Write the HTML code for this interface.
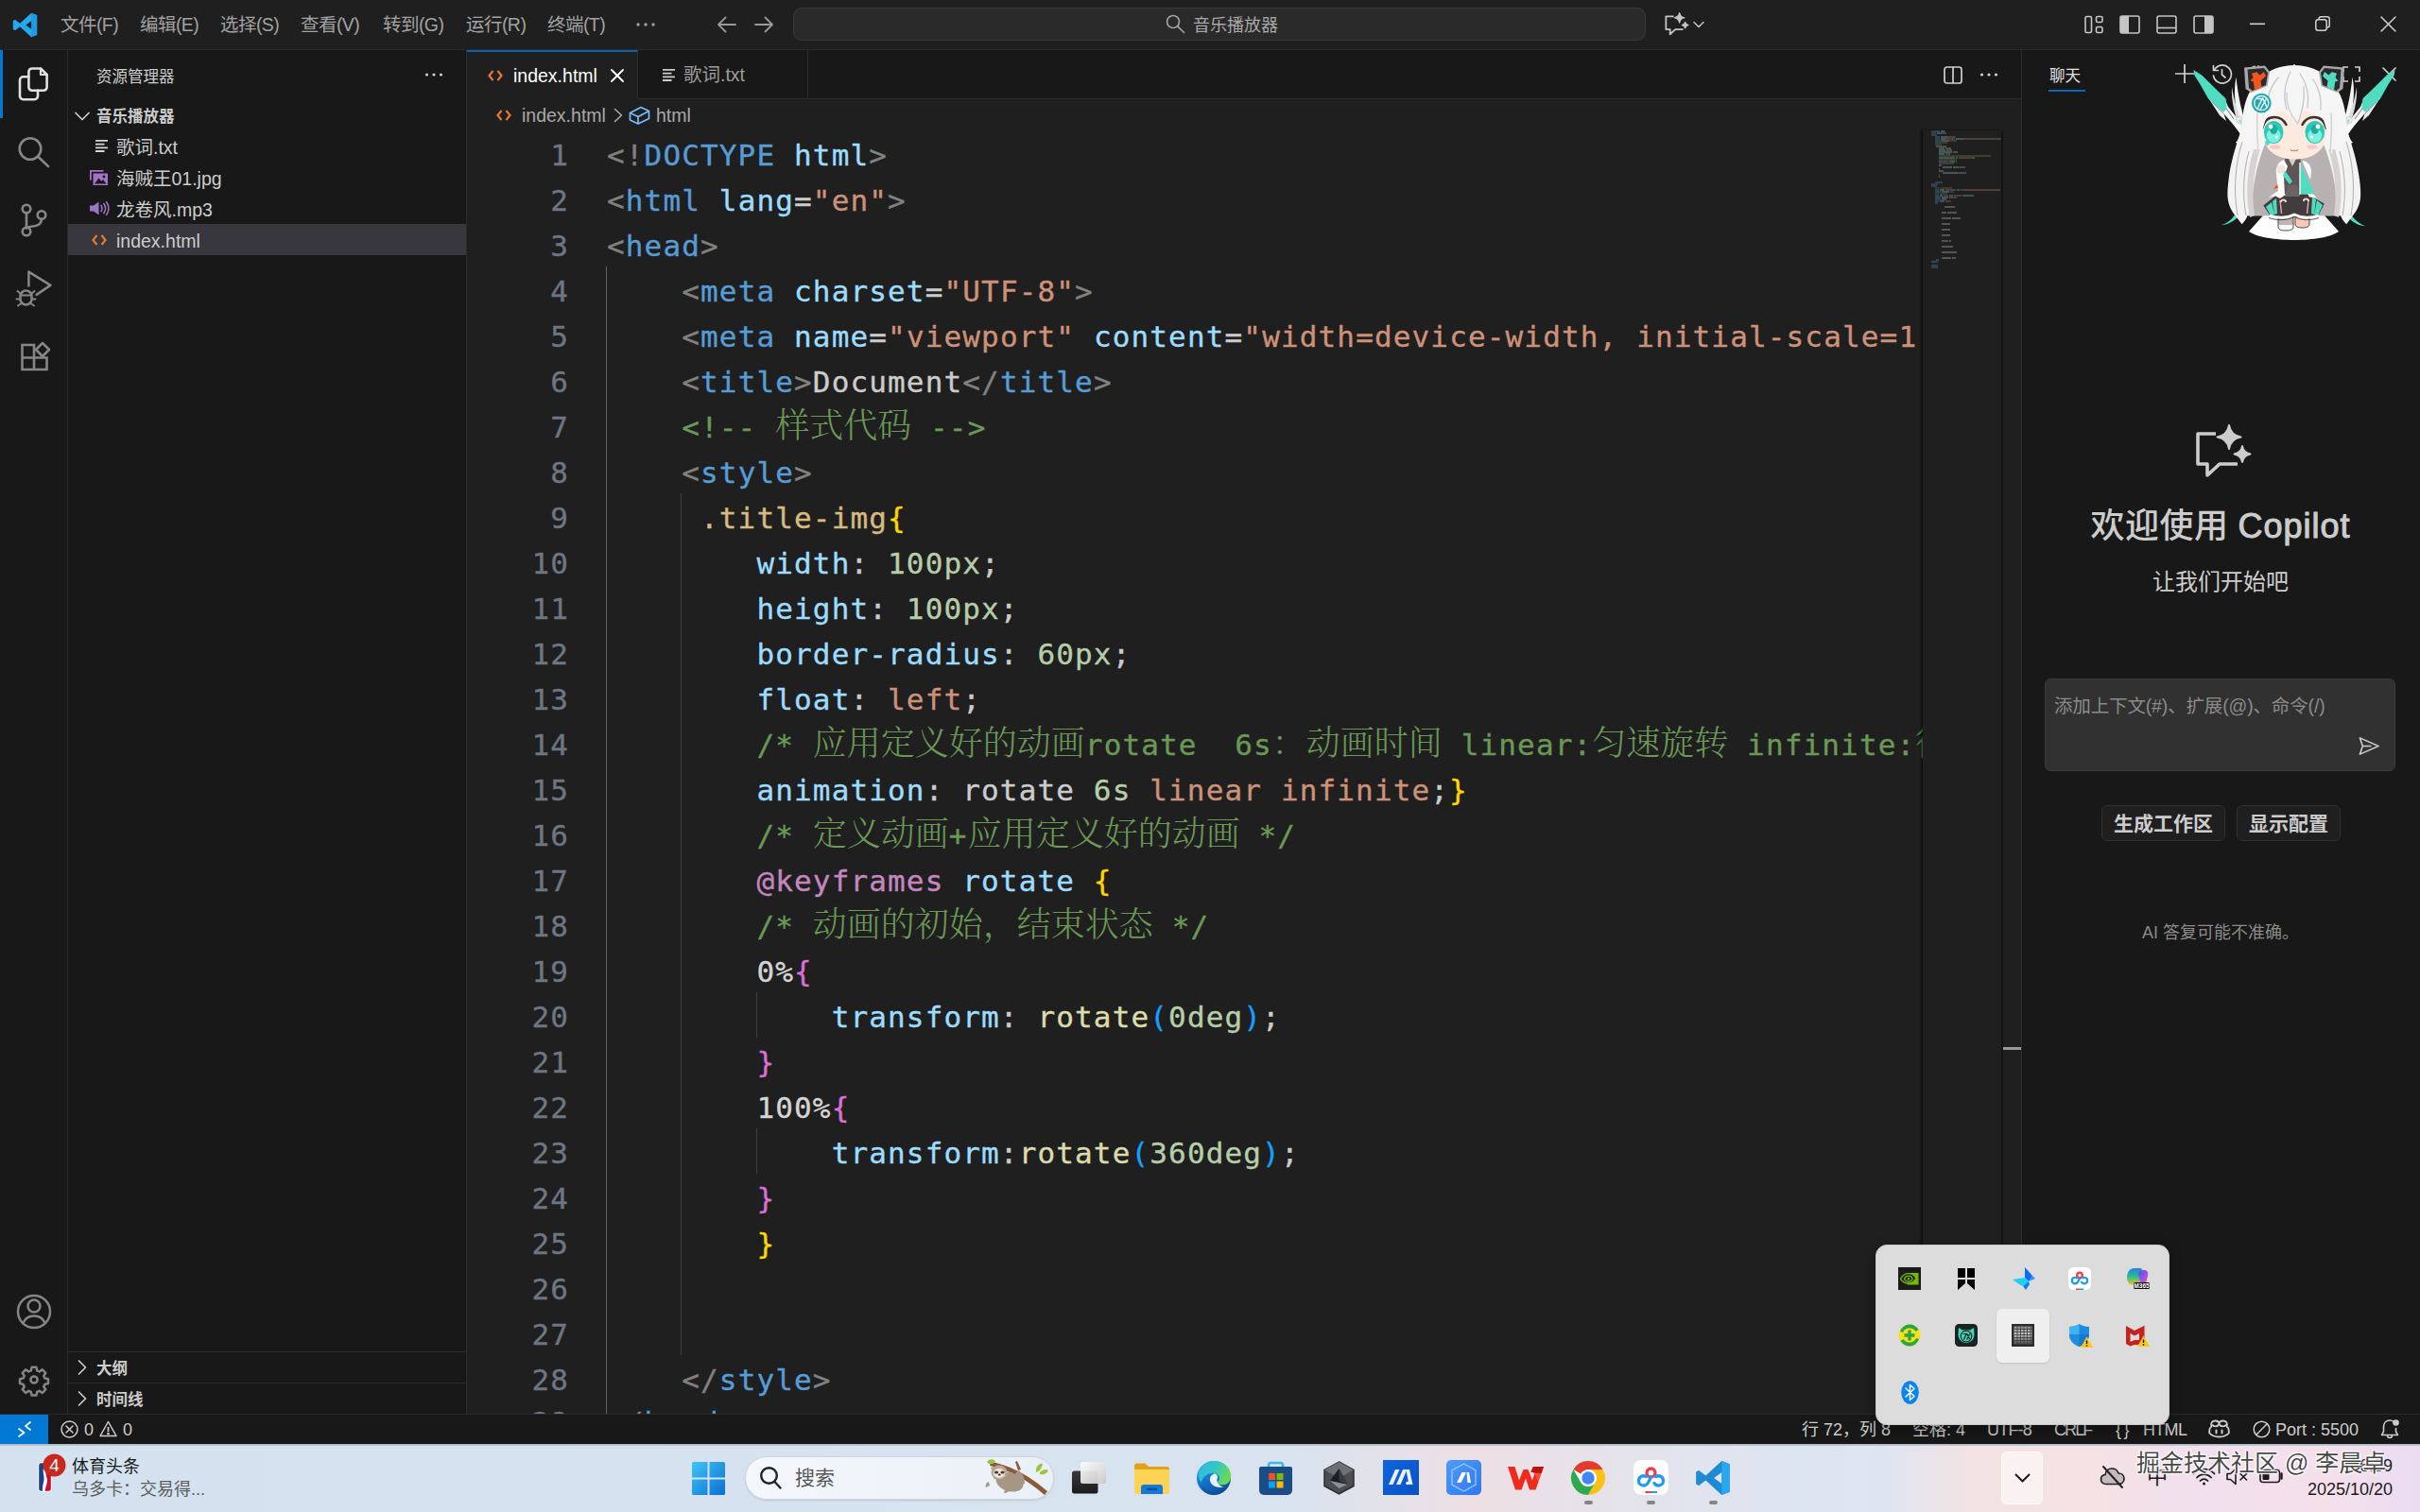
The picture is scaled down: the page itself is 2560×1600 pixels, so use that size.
<!DOCTYPE html>
<html lang="zh-CN">
<head>
<meta charset="UTF-8">
<title>音乐播放器 - Visual Studio Code</title>
<style>
*{box-sizing:border-box;margin:0;padding:0}
html,body{width:2560px;height:1600px;overflow:hidden;background:#181818}
body{font-family:"Liberation Sans","Noto Sans CJK SC",sans-serif;color:#ccc;font-size:19.5px;-webkit-font-smoothing:antialiased}
#app{position:absolute;left:0;top:0;width:2560px;height:1600px;overflow:hidden;background:#181818}
.abs{position:absolute}
svg{display:block;overflow:visible}
/* title bar */
#titlebar{position:absolute;left:0;top:0;width:2560px;height:53px;background:#1f1f1f;border-bottom:1px solid #2b2b2b}
#titlebar .menu{position:absolute;top:0;height:52px;line-height:52px;font-size:19.5px;color:#a2a2a2;white-space:nowrap;letter-spacing:-.55px}
#cmd{position:absolute;left:839px;top:8px;width:902px;height:35px;border:1px solid #3a3a3a;border-radius:9px;background:#2a2a2a}
#cmd .t{position:absolute;left:422px;top:0;line-height:36px;font-size:18px;color:#a8a8a8;white-space:nowrap}
/* activity bar */
#activity{position:absolute;left:0;top:53px;width:72px;height:1443px;background:#181818;border-right:1px solid #2b2b2b}
#activity .act{position:absolute;left:0;top:0;width:3px;height:72px;background:#0078d4}
/* sidebar */
#sidebar{position:absolute;left:72px;top:53px;width:422px;height:1443px;background:#181818;border-right:1px solid #2b2b2b}
#sidebar .title{position:absolute;left:30px;top:13px;font-size:16.5px;line-height:30px;color:#ccc;white-space:nowrap}
#sidebar .hdr{position:absolute;left:30px;font-size:16.5px;font-weight:bold;color:#ccc;line-height:37px;white-space:nowrap}
#sidebar .row{position:absolute;left:0;width:421px;height:33px;line-height:36px;font-size:19.5px;color:#ccc;white-space:nowrap}
#sidebar .row .nm{position:absolute;left:51px;top:0}
#sidebar .row.sel{background:#37373d}
#sidebar .sep{position:absolute;left:0;width:421px;height:1px;background:#2b2b2b}
/* editor */
#editor{position:absolute;left:494px;top:53px;width:1644px;height:1443px;background:#1f1f1f;overflow:hidden}
#tabs{position:absolute;left:0;top:0;width:1645px;height:52px;background:#181818;border-bottom:1px solid #2b2b2b}
#tabs .tab{position:absolute;top:0;height:52px;border-right:1px solid #2b2b2b;font-size:19.5px;line-height:53px;white-space:nowrap}
#tabs .tab.on{background:#1f1f1f;border-top:2px solid #0b62ad;color:#fff;height:53px;line-height:51px}
#bc{position:absolute;left:0;top:52px;width:1645px;height:33px;background:#1f1f1f;font-size:19.5px;color:#a9a9a9;line-height:35px;white-space:nowrap}
#code{position:absolute;left:0;top:85px;width:1540px;height:1358px;overflow:hidden;background:#1f1f1f}
#code .ln{position:relative;height:48px;line-height:48px;white-space:pre;font-family:"DejaVu Sans Mono","Liberation Mono","Noto Serif CJK SC",monospace;font-size:31px;letter-spacing:1.138px;-webkit-text-stroke:.35px}
#code .no{position:absolute;left:0;top:2px;width:108px;text-align:right;color:#6e7681}
#code .tx{position:absolute;left:148px;top:2px}
#code .zh{font-family:"Noto Serif CJK SC",serif;font-weight:300;font-size:36px;line-height:0;letter-spacing:0;-webkit-text-stroke:0}
#code .guide{position:absolute;width:1px;background:#404040}
#minimap{position:absolute;left:1540px;top:85px;width:83px;height:1357px;background:#1f1f1f;box-shadow:-2px 0 2px rgba(0,0,0,.55)}
#mmc{position:absolute;left:9px;top:0;width:74px;height:150px;overflow:hidden}
#mmc i{position:absolute;height:2px;display:block}
#mmc{opacity:.52}
#vscroll{position:absolute;left:1623px;top:85px;width:21px;height:1357px;border-left:2px solid #141414;background:#1f1f1f}
#vscroll .mark{position:absolute;left:0;top:970px;width:19px;height:3px;background:#9a9a9a}
/* chat */
#chat{position:absolute;left:2138px;top:53px;width:422px;height:1443px;background:#181818;border-left:1px solid #2b2b2b}
/* status bar */
#status{position:absolute;left:0;top:1496px;width:2560px;height:32px;background:#181818;border-top:1px solid #2b2b2b;font-size:18px;color:#ccc;white-space:nowrap}
#status .it{position:absolute;top:0;line-height:33px}
#status .remote{position:absolute;left:0;top:0;width:51px;height:32px;background:#0078d4}
/* taskbar */
#taskbar{position:absolute;left:0;top:1528px;width:2560px;height:72px;background:linear-gradient(90deg,#d4e2f0 0%,#d8e3ef 53%,#e6e1e8 58%,#eddfe4 61%,#e6e2ea 66%,#dde5f1 74%,#dfe5f0 78%,#f3e3e3 81.500%,#f6e2e4 86%,#f1e0ee 91%,#f5e0ea 96%,#eadcf2 100%)}

</style>
</head>
<body>
<div id="app">
<div id="titlebar">
<svg class="abs" style="left:13px;top:13px" width="27" height="27" viewBox="0 0 100 100"><path d="M74.5 2.5 30 43.5 11 29 3 33v34l8 4 19-14.5 44.500 41L97 88.500v-77zM74.500 66 53 50l21.500-16z" fill="#23a9f2"/><path d="M74.500 2.500 97 11.500v77l-22.500 9z" fill="#1e8fd8" opacity=".55"/></svg>
<div class="menu" style="left:64px">文件(F)</div>
<div class="menu" style="left:148px">编辑(E)</div>
<div class="menu" style="left:233px">选择(S)</div>
<div class="menu" style="left:318px">查看(V)</div>
<div class="menu" style="left:405px">转到(G)</div>
<div class="menu" style="left:493px">运行(R)</div>
<div class="menu" style="left:579px">终端(T)</div>
<svg class="abs" style="left:672px;top:23px" width="22" height="6" viewBox="0 0 22 6"><circle cx="3" cy="3" r="1.7" fill="#a2a2a2"/><circle cx="11" cy="3" r="1.7" fill="#a2a2a2"/><circle cx="19" cy="3" r="1.7" fill="#a2a2a2"/></svg>
<svg class="abs" style="left:758px;top:17px" width="22" height="18" viewBox="0 0 22 18" fill="none" stroke="#9a9a9a" stroke-width="1.8" stroke-linecap="round" stroke-linejoin="round"><path d="M20 9H2M9.500 1.500 2 9l7.500 7.500"/></svg>
<svg class="abs" style="left:797px;top:17px" width="22" height="18" viewBox="0 0 22 18" fill="none" stroke="#9a9a9a" stroke-width="1.800" stroke-linecap="round" stroke-linejoin="round"><path d="M2 9h18M12.500 1.500 20 9l-7.500 7.500"/></svg>
<div id="cmd">
<svg class="abs" style="left:393px;top:6px" width="21" height="21" viewBox="0 0 21 21" fill="none" stroke="#a0a0a0" stroke-width="1.700" stroke-linecap="round"><circle cx="8" cy="8" r="6.500"/><path d="M12.800 12.800 19.500 19.500"/></svg>
<div class="t">音乐播放器</div>
</div>
<!-- copilot chat icon -->
<svg class="abs" style="left:1761px;top:13px" width="26" height="25" viewBox="0 0 60 58" fill="none" stroke="#c5c5c5" stroke-width="4.200" stroke-linejoin="round"><path d="M22 10H3v32h10v12l13-12h19"/><path d="M36 1Q37.800 11.700 48.500 13.500 37.800 15.300 36 26 34.200 15.300 23.500 13.500 34.200 11.700 36 1Z" fill="#c5c5c5" stroke-width="2.500"/><path d="M50 23Q51.400 30.100 58.500 31.500 51.400 32.900 50 40 48.600 32.900 41.500 31.500 48.600 30.100 50 23Z" fill="#c5c5c5" stroke-width="2.200"/></svg>
<svg class="abs" style="left:1791px;top:22px" width="12" height="8" viewBox="0 0 12 8" fill="none" stroke="#c5c5c5" stroke-width="1.500" stroke-linecap="round" stroke-linejoin="round"><path d="M1 1.500 6 6.500l5-5"/></svg>
<!-- layout icons -->
<svg class="abs" style="left:2205px;top:16px" width="21" height="20" viewBox="0 0 21 20" fill="none" stroke="#c5c5c5" stroke-width="1.600"><rect x="1" y="1.500" width="6.500" height="17" rx="1.500"/><rect x="12.500" y="1.500" width="6.500" height="6" rx="1.500"/><rect x="12.500" y="12.500" width="6.500" height="6" rx="1.500"/></svg>
<svg class="abs" style="left:2242px;top:16px" width="22" height="20" viewBox="0 0 22 20"><rect x="1" y="1" width="20" height="18" rx="2" fill="none" stroke="#c5c5c5" stroke-width="1.600"/><path d="M1 3a2 2 0 0 1 2-2h7v18H3a2 2 0 0 1-2-2z" fill="#c5c5c5"/></svg>
<svg class="abs" style="left:2281px;top:16px" width="22" height="20" viewBox="0 0 22 20"><rect x="1" y="1" width="20" height="18" rx="2" fill="none" stroke="#c5c5c5" stroke-width="1.600"/><path d="M1 13.500h20" stroke="#c5c5c5" stroke-width="1.600"/></svg>
<svg class="abs" style="left:2320px;top:16px" width="22" height="20" viewBox="0 0 22 20"><rect x="1" y="1" width="20" height="18" rx="2" fill="none" stroke="#c5c5c5" stroke-width="1.600"/><path d="M21 3a2 2 0 0 0-2-2h-7v18h7a2 2 0 0 0 2-2z" fill="#c5c5c5"/></svg>
<!-- window controls -->
<svg class="abs" style="left:2380px;top:24px" width="16" height="3" viewBox="0 0 16 3"><rect x="0" y="0.500" width="16" height="1.600" fill="#d0d0d0"/></svg>
<svg class="abs" style="left:2449px;top:17px" width="16" height="16" viewBox="0 0 16 16" fill="none" stroke="#d0d0d0" stroke-width="1.500"><rect x="0.800" y="3.800" width="11.400" height="11.400" rx="2.500"/><path d="M4 3.500V3A2.200 2.200 0 0 1 6.200 0.800H13A2.200 2.200 0 0 1 15.200 3v6.800A2.200 2.200 0 0 1 13 12h-.500"/></svg>
<svg class="abs" style="left:2518px;top:17px" width="17" height="17" viewBox="0 0 17 17" fill="none" stroke="#d0d0d0" stroke-width="1.500" stroke-linecap="round"><path d="M1 1 16 16M16 1 1 16"/></svg>
</div>

<div id="activity">
<div class="act"></div>
<svg class="abs" style="left:0;top:-53px" width="72" height="1495" viewBox="0 0 72 1495" fill="none" stroke-linecap="round" stroke-linejoin="round">
<!-- explorer -->
<g stroke="#e0e0e0" stroke-width="2.600">
<path d="M33.900 72.500H43L49.600 79V92.300a3.500 3.500 0 0 1-3.500 3.500H33.900a3.500 3.500 0 0 1-3.500-3.500V76a3.500 3.500 0 0 1 3.500-3.500z"/>
<path d="M43 72.500V79h6.600" stroke-width="2.200"/>
<path d="M30.400 81.300H24.500a3.500 3.500 0 0 0-3.500 3.500v16.900a3.500 3.500 0 0 0 3.500 3.500h12a3.500 3.500 0 0 0 3.500-3.500V95.800"/>
</g>
<!-- search -->
<g stroke="#868686" stroke-width="2.600">
<circle cx="32" cy="157.500" r="11.300"/><path d="M40.500 166 51 176"/>
</g>
<!-- source control -->
<g stroke="#868686" stroke-width="2.600">
<circle cx="28" cy="221" r="4.300"/><circle cx="28" cy="245" r="4.300"/><circle cx="44" cy="227.500" r="4.300"/>
<path d="M28 225.500v15M44 232c0 5-4 7-9 7.500-3 .3-6 .5-7 2"/>
</g>
<!-- run and debug -->
<g stroke="#868686" stroke-width="2.500">
<path d="M30.400 302.500V287.600L53.400 301.900 38.600 311.900"/>
<path d="M21.500 313.500a6 6 0 0 1 12 0v3a6 6 0 0 1-12 0z"/>
<path d="M21.500 312.500h12" stroke-width="2"/>
<path d="M21.500 310.500 18.500 308M33.500 310.500 36.500 308M21 316.500H17.500M34 316.500h3.500M22.500 321 19 323.500M32.500 321 36 323.500" stroke-width="2"/>
</g>
<!-- extensions -->
<g stroke="#868686" stroke-width="2.600" stroke-linejoin="miter">
<path d="M23.500 365h12.500v26H23.500zM23.500 378.500H49.500v12.500H36"/>
<path d="M45 363 52 370 45 377 38 370z" stroke-linejoin="round"/>
</g>
<!-- account -->
<g stroke="#868686" stroke-width="2.500">
<circle cx="36" cy="1388" r="17"/><circle cx="36" cy="1382" r="6.500"/><path d="M24.500 1400.500c2-6 7-8 11.500-8s9.500 2 11.500 8"/>
</g>
<!-- settings gear -->
<g stroke="#868686" stroke-width="2.900" transform="translate(36 1460) scale(.86)">
<circle r="4.200"/>
<path d="M-2.800 -15.500h5.600l1 4.300 2.700 1.200 3.800-2.400 4 4-2.400 3.800 1.200 2.700 4.300 1v5.600l-4.300 1-1.200 2.700 2.400 3.800-4 4-3.800-2.400-2.700 1.200-1 4.300h-5.600l-1-4.300-2.700-1.200-3.800 2.400-4-4 2.400-3.800-1.200-2.700-4.300-1v-5.600l4.300-1 1.200-2.700-2.400-3.800 4-4 3.800 2.400 2.700-1.200z"/>
</g>
</svg>
</div>

<div id="sidebar">
<div class="title">资源管理器</div>
<svg class="abs" style="left:377px;top:23px" width="20" height="6" viewBox="0 0 20 6"><circle cx="2.500" cy="3" r="1.600" fill="#ccc"/><circle cx="10" cy="3" r="1.600" fill="#ccc"/><circle cx="17.500" cy="3" r="1.600" fill="#ccc"/></svg>
<svg class="abs" style="left:7px;top:65px" width="16" height="10" viewBox="0 0 16 10" fill="none" stroke="#ccc" stroke-width="1.700" stroke-linecap="round" stroke-linejoin="round"><path d="M1 1.500 8 8.500l7-7"/></svg>
<div class="hdr" style="top:52px">音乐播放器</div>
<div class="row" style="top:85px">
<svg class="abs" style="left:29px;top:10px" width="13" height="13" viewBox="0 0 13 13"><path d="M0 0h13v1.800H0zM0 3.700h9.500v1.800H0zM0 7.400h13v1.800H0zM0 11.100h9.500v1.800H0z" fill="#d4d7d6"/></svg>
<span class="nm">歌词.txt</span></div>
<div class="row" style="top:118px">
<svg class="abs" style="left:23px;top:9px" width="19" height="16" viewBox="0 0 19 16"><path d="M0 0h14.500v1.800H1.800V10.500H0z" fill="#a074c4"/><path d="M3.500 3.500H19V16H3.500z" fill="#a074c4"/><path d="M5 14.500 9.500 8.500l2.700 3.300 1.800-1.800 3.500 4.500z" fill="#181818"/><circle cx="15" cy="7" r="1.400" fill="#181818"/></svg>
<span class="nm">海贼王01.jpg</span></div>
<div class="row" style="top:151px">
<svg class="abs" style="left:23px;top:9px" width="20" height="15" viewBox="0 0 20 15" fill="none" stroke="#a074c4" stroke-width="1.600" stroke-linecap="round"><path d="M0 4.500h4L9.500 0.500v14L4 10.500H0z" fill="#a074c4" stroke="none"/><path d="M12 4.500c1.200 1.800 1.200 4.200 0 6M14.800 2.500c2.200 3 2.200 7 0 10M17.600 0.800c3 4 3 9.400 0 13.400"/></svg>
<span class="nm">龙卷风.mp3</span></div>
<div class="row sel" style="top:184px">
<svg class="abs" style="left:25px;top:11px" width="16" height="12" viewBox="0 0 16 12" fill="none" stroke="#e37933" stroke-width="2.200" stroke-linejoin="miter"><path d="M5.500 1 1.500 6l4 5M10.500 1l4 5-4 5"/></svg>
<span class="nm">index.html</span></div>
<div class="sep" style="top:1377px"></div>
<svg class="abs" style="left:10px;top:1386px" width="10" height="16" viewBox="0 0 10 16" fill="none" stroke="#ccc" stroke-width="1.700" stroke-linecap="round" stroke-linejoin="round"><path d="M1.500 1 8.500 8l-7 7"/></svg>
<div class="hdr" style="top:1377px">大纲</div>
<div class="sep" style="top:1410px"></div>
<svg class="abs" style="left:10px;top:1419px" width="10" height="16" viewBox="0 0 10 16" fill="none" stroke="#ccc" stroke-width="1.700" stroke-linecap="round" stroke-linejoin="round"><path d="M1.500 1 8.500 8l-7 7"/></svg>
<div class="hdr" style="top:1410px">时间线</div>
</div>

<div id="editor">
<div id="tabs">
<div class="tab on" style="left:0;width:181px">
<svg class="abs" style="left:22px;top:19px" width="16" height="12" viewBox="0 0 16 12" fill="none" stroke="#e37933" stroke-width="2.200"><path d="M5.500 1 1.500 6l4 5M10.500 1l4 5-4 5"/></svg>
<span class="abs" style="left:49px;top:0">index.html</span>
<svg class="abs" style="left:152px;top:18px" width="14" height="14" viewBox="0 0 14 14" fill="none" stroke="#fff" stroke-width="1.900" stroke-linecap="round"><path d="M1 1 13 13M13 1 1 13"/></svg>
</div>
<div class="tab" style="left:181px;width:180px;color:#9d9d9d">
<svg class="abs" style="left:26px;top:20px" width="13" height="13" viewBox="0 0 13 13"><path d="M0 0h13v1.800H0zM0 3.700h9.500v1.800H0zM0 7.400h13v1.800H0zM0 11.100h9.500v1.800H0z" fill="#c9cccb"/></svg>
<span class="abs" style="left:48px;top:0">歌词.txt</span>
</div>
<!-- split editor + more -->
<svg class="abs" style="left:1562px;top:17px" width="20" height="19" viewBox="0 0 20 19" fill="none" stroke="#d0d0d0" stroke-width="1.700"><rect x="1" y="1" width="18" height="17" rx="2.500"/><path d="M10 1v17"/></svg>
<svg class="abs" style="left:1600px;top:23px" width="20" height="6" viewBox="0 0 20 6"><circle cx="2.500" cy="3" r="1.600" fill="#d0d0d0"/><circle cx="10" cy="3" r="1.600" fill="#d0d0d0"/><circle cx="17.500" cy="3" r="1.600" fill="#d0d0d0"/></svg>
</div>
<div id="bc">
<svg class="abs" style="left:31px;top:11px" width="16" height="12" viewBox="0 0 16 12" fill="none" stroke="#e37933" stroke-width="2.200"><path d="M5.500 1 1.500 6l4 5M10.500 1l4 5-4 5"/></svg>
<span class="abs" style="left:58px;top:0">index.html</span>
<svg class="abs" style="left:155px;top:9px" width="10" height="16" viewBox="0 0 10 16" fill="none" stroke="#a9a9a9" stroke-width="1.600" stroke-linecap="round" stroke-linejoin="round"><path d="M1.500 1.500 8.500 8l-7 6.500"/></svg>
<svg class="abs" style="left:171px;top:7px" width="23" height="20" viewBox="0 0 23 20" fill="none" stroke="#75beff" stroke-width="1.700" stroke-linejoin="round"><path d="M1.500 7.500 13 1.500 21.500 5.500v8L10 19l-8.500-4z"/><path d="M1.500 7.500 10 11.500 21.500 5.500M10 11.500V19"/></svg>
<span class="abs" style="left:200px;top:0">html</span>
</div>

<div id="code">
<div class="guide" style="left:147px;top:144px;height:1220px;background:#646464"></div>
<div class="guide" style="left:226px;top:384px;height:912px"></div>
<div class="guide" style="left:306px;top:912px;height:48px"></div>
<div class="guide" style="left:306px;top:1056px;height:48px"></div>
<div class="ln"><span class="no">1</span><span class="tx"><span style="color:#808080">&lt;!</span><span style="color:#569cd6">DOCTYPE</span><span style="color:#9cdcfe"> html</span><span style="color:#808080">&gt;</span></span></div>
<div class="ln"><span class="no">2</span><span class="tx"><span style="color:#808080">&lt;</span><span style="color:#569cd6">html</span><span style="color:#9cdcfe"> lang</span><span style="color:#cccccc">=</span><span style="color:#ce9178">"en"</span><span style="color:#808080">&gt;</span></span></div>
<div class="ln"><span class="no">3</span><span class="tx"><span style="color:#808080">&lt;</span><span style="color:#569cd6">head</span><span style="color:#808080">&gt;</span></span></div>
<div class="ln"><span class="no">4</span><span class="tx"><span style="color:#cccccc">    </span><span style="color:#808080">&lt;</span><span style="color:#569cd6">meta</span><span style="color:#9cdcfe"> charset</span><span style="color:#cccccc">=</span><span style="color:#ce9178">"UTF-8"</span><span style="color:#808080">&gt;</span></span></div>
<div class="ln"><span class="no">5</span><span class="tx"><span style="color:#cccccc">    </span><span style="color:#808080">&lt;</span><span style="color:#569cd6">meta</span><span style="color:#9cdcfe"> name</span><span style="color:#cccccc">=</span><span style="color:#ce9178">"viewport"</span><span style="color:#9cdcfe"> content</span><span style="color:#cccccc">=</span><span style="color:#ce9178">"width=device-width, initial-scale=1.0"</span><span style="color:#808080">&gt;</span></span></div>
<div class="ln"><span class="no">6</span><span class="tx"><span style="color:#cccccc">    </span><span style="color:#808080">&lt;</span><span style="color:#569cd6">title</span><span style="color:#808080">&gt;</span><span style="color:#cccccc">Document</span><span style="color:#808080">&lt;/</span><span style="color:#569cd6">title</span><span style="color:#808080">&gt;</span></span></div>
<div class="ln"><span class="no">7</span><span class="tx"><span style="color:#cccccc">    </span><span style="color:#6a9955">&lt;!-- <span class="zh">样式代码</span> --&gt;</span></span></div>
<div class="ln"><span class="no">8</span><span class="tx"><span style="color:#cccccc">    </span><span style="color:#808080">&lt;</span><span style="color:#569cd6">style</span><span style="color:#808080">&gt;</span></span></div>
<div class="ln"><span class="no">9</span><span class="tx"><span style="color:#cccccc">     </span><span style="color:#d7ba7d">.title-img</span><span style="color:#ffd700">{</span></span></div>
<div class="ln"><span class="no">10</span><span class="tx"><span style="color:#cccccc">        </span><span style="color:#9cdcfe">width</span><span style="color:#cccccc">: </span><span style="color:#b5cea8">100px</span><span style="color:#cccccc">;</span></span></div>
<div class="ln"><span class="no">11</span><span class="tx"><span style="color:#cccccc">        </span><span style="color:#9cdcfe">height</span><span style="color:#cccccc">: </span><span style="color:#b5cea8">100px</span><span style="color:#cccccc">;</span></span></div>
<div class="ln"><span class="no">12</span><span class="tx"><span style="color:#cccccc">        </span><span style="color:#9cdcfe">border-radius</span><span style="color:#cccccc">: </span><span style="color:#b5cea8">60px</span><span style="color:#cccccc">;</span></span></div>
<div class="ln"><span class="no">13</span><span class="tx"><span style="color:#cccccc">        </span><span style="color:#9cdcfe">float</span><span style="color:#cccccc">: </span><span style="color:#ce9178">left</span><span style="color:#cccccc">;</span></span></div>
<div class="ln"><span class="no">14</span><span class="tx"><span style="color:#cccccc">        </span><span style="color:#6a9955">/* <span class="zh">应用定义好的动画</span>rotate  6s<span class="zh">：动画时间</span> linear:<span class="zh">匀速旋转</span> infinite:<span class="zh">循环播放</span> */</span></span></div>
<div class="ln"><span class="no">15</span><span class="tx"><span style="color:#cccccc">        </span><span style="color:#9cdcfe">animation</span><span style="color:#cccccc">: rotate </span><span style="color:#b5cea8">6s</span><span style="color:#ce9178"> linear infinite</span><span style="color:#cccccc">;</span><span style="color:#ffd700">}</span></span></div>
<div class="ln"><span class="no">16</span><span class="tx"><span style="color:#cccccc">        </span><span style="color:#6a9955">/* <span class="zh">定义动画</span>+<span class="zh">应用定义好的动画</span> */</span></span></div>
<div class="ln"><span class="no">17</span><span class="tx"><span style="color:#cccccc">        </span><span style="color:#c586c0">@keyframes</span><span style="color:#9cdcfe"> rotate </span><span style="color:#ffd700">{</span></span></div>
<div class="ln"><span class="no">18</span><span class="tx"><span style="color:#cccccc">        </span><span style="color:#6a9955">/* <span class="zh">动画的初始，结束状态</span> */</span></span></div>
<div class="ln"><span class="no">19</span><span class="tx"><span style="color:#cccccc">        </span><span style="color:#d4d4d4">0%</span><span style="color:#da70d6">{</span></span></div>
<div class="ln"><span class="no">20</span><span class="tx"><span style="color:#cccccc">            </span><span style="color:#9cdcfe">transform</span><span style="color:#cccccc">: </span><span style="color:#dcdcaa">rotate</span><span style="color:#179fff">(</span><span style="color:#b5cea8">0deg</span><span style="color:#179fff">)</span><span style="color:#cccccc">;</span></span></div>
<div class="ln"><span class="no">21</span><span class="tx"><span style="color:#cccccc">        </span><span style="color:#da70d6">}</span></span></div>
<div class="ln"><span class="no">22</span><span class="tx"><span style="color:#cccccc">        </span><span style="color:#d4d4d4">100%</span><span style="color:#da70d6">{</span></span></div>
<div class="ln"><span class="no">23</span><span class="tx"><span style="color:#cccccc">            </span><span style="color:#9cdcfe">transform</span><span style="color:#cccccc">:</span><span style="color:#dcdcaa">rotate</span><span style="color:#179fff">(</span><span style="color:#b5cea8">360deg</span><span style="color:#179fff">)</span><span style="color:#cccccc">;</span></span></div>
<div class="ln"><span class="no">24</span><span class="tx"><span style="color:#cccccc">        </span><span style="color:#da70d6">}</span></span></div>
<div class="ln"><span class="no">25</span><span class="tx"><span style="color:#cccccc">        </span><span style="color:#ffd700">}</span></span></div>
<div class="ln"><span class="no">26</span><span class="tx"></span></div>
<div class="ln"><span class="no">27</span><span class="tx"></span></div>
<div class="ln"><span class="no">28</span><span class="tx"><span style="color:#cccccc">    </span><span style="color:#808080">&lt;/</span><span style="color:#569cd6">style</span><span style="color:#808080">&gt;</span></span></div>
<div class="ln" style="margin-top:-3px"><span class="no">29</span><span class="tx"><span style="color:#808080">&lt;/</span><span style="color:#569cd6">head</span><span style="color:#808080">&gt;</span></span></div>
</div>
<div id="minimap"><div id="mmc"><i style="left:0px;top:0px;width:2px;background:#808080;opacity:0.55"></i><i style="left:2px;top:0px;width:7px;background:#569cd6;opacity:0.55"></i><i style="left:10px;top:0px;width:4px;background:#9cdcfe;opacity:0.55"></i><i style="left:14px;top:0px;width:1px;background:#808080;opacity:0.55"></i><i style="left:0px;top:2px;width:1px;background:#808080;opacity:0.55"></i><i style="left:1px;top:2px;width:4px;background:#569cd6;opacity:0.55"></i><i style="left:6px;top:2px;width:4px;background:#9cdcfe;opacity:0.55"></i><i style="left:10px;top:2px;width:1px;background:#cccccc;opacity:0.55"></i><i style="left:11px;top:2px;width:4px;background:#ce9178;opacity:0.55"></i><i style="left:15px;top:2px;width:1px;background:#808080;opacity:0.55"></i><i style="left:0px;top:4px;width:1px;background:#808080;opacity:0.55"></i><i style="left:1px;top:4px;width:4px;background:#569cd6;opacity:0.55"></i><i style="left:5px;top:4px;width:1px;background:#808080;opacity:0.55"></i><i style="left:4px;top:6px;width:1px;background:#808080;opacity:0.55"></i><i style="left:5px;top:6px;width:4px;background:#569cd6;opacity:0.55"></i><i style="left:10px;top:6px;width:7px;background:#9cdcfe;opacity:0.55"></i><i style="left:17px;top:6px;width:1px;background:#cccccc;opacity:0.55"></i><i style="left:18px;top:6px;width:7px;background:#ce9178;opacity:0.55"></i><i style="left:25px;top:6px;width:1px;background:#808080;opacity:0.55"></i><i style="left:4px;top:8px;width:1px;background:#808080;opacity:0.55"></i><i style="left:5px;top:8px;width:4px;background:#569cd6;opacity:0.55"></i><i style="left:10px;top:8px;width:4px;background:#9cdcfe;opacity:0.55"></i><i style="left:14px;top:8px;width:1px;background:#cccccc;opacity:0.55"></i><i style="left:15px;top:8px;width:10px;background:#ce9178;opacity:0.55"></i><i style="left:26px;top:8px;width:7px;background:#9cdcfe;opacity:0.55"></i><i style="left:33px;top:8px;width:1px;background:#cccccc;opacity:0.55"></i><i style="left:34px;top:8px;width:39px;background:#ce9178;opacity:0.55"></i><i style="left:73px;top:8px;width:1px;background:#808080;opacity:0.55"></i><i style="left:4px;top:10px;width:1px;background:#808080;opacity:0.55"></i><i style="left:5px;top:10px;width:5px;background:#569cd6;opacity:0.55"></i><i style="left:10px;top:10px;width:1px;background:#808080;opacity:0.55"></i><i style="left:11px;top:10px;width:8px;background:#cccccc;opacity:0.55"></i><i style="left:19px;top:10px;width:2px;background:#808080;opacity:0.55"></i><i style="left:21px;top:10px;width:5px;background:#569cd6;opacity:0.55"></i><i style="left:26px;top:10px;width:1px;background:#808080;opacity:0.55"></i><i style="left:4px;top:12px;width:13px;background:#6a9955;opacity:0.55"></i><i style="left:4px;top:14px;width:1px;background:#808080;opacity:0.55"></i><i style="left:5px;top:14px;width:5px;background:#569cd6;opacity:0.55"></i><i style="left:10px;top:14px;width:1px;background:#808080;opacity:0.55"></i><i style="left:5px;top:16px;width:10px;background:#d7ba7d;opacity:0.55"></i><i style="left:15px;top:16px;width:1px;background:#ffd700;opacity:0.55"></i><i style="left:8px;top:18px;width:5px;background:#9cdcfe;opacity:0.55"></i><i style="left:13px;top:18px;width:1px;background:#cccccc;opacity:0.55"></i><i style="left:15px;top:18px;width:5px;background:#b5cea8;opacity:0.55"></i><i style="left:20px;top:18px;width:1px;background:#cccccc;opacity:0.55"></i><i style="left:8px;top:20px;width:6px;background:#9cdcfe;opacity:0.55"></i><i style="left:14px;top:20px;width:1px;background:#cccccc;opacity:0.55"></i><i style="left:16px;top:20px;width:5px;background:#b5cea8;opacity:0.55"></i><i style="left:21px;top:20px;width:1px;background:#cccccc;opacity:0.55"></i><i style="left:8px;top:22px;width:13px;background:#9cdcfe;opacity:0.55"></i><i style="left:21px;top:22px;width:1px;background:#cccccc;opacity:0.55"></i><i style="left:23px;top:22px;width:4px;background:#b5cea8;opacity:0.55"></i><i style="left:27px;top:22px;width:1px;background:#cccccc;opacity:0.55"></i><i style="left:8px;top:24px;width:5px;background:#9cdcfe;opacity:0.55"></i><i style="left:13px;top:24px;width:1px;background:#cccccc;opacity:0.55"></i><i style="left:15px;top:24px;width:4px;background:#ce9178;opacity:0.55"></i><i style="left:19px;top:24px;width:1px;background:#cccccc;opacity:0.55"></i><i style="left:8px;top:26px;width:55px;background:#6a9955;opacity:0.55"></i><i style="left:8px;top:28px;width:9px;background:#9cdcfe;opacity:0.55"></i><i style="left:17px;top:28px;width:8px;background:#cccccc;opacity:0.55"></i><i style="left:26px;top:28px;width:2px;background:#b5cea8;opacity:0.55"></i><i style="left:29px;top:28px;width:15px;background:#ce9178;opacity:0.55"></i><i style="left:44px;top:28px;width:1px;background:#cccccc;opacity:0.55"></i><i style="left:45px;top:28px;width:1px;background:#ffd700;opacity:0.55"></i><i style="left:8px;top:30px;width:19px;background:#6a9955;opacity:0.55"></i><i style="left:8px;top:32px;width:10px;background:#c586c0;opacity:0.55"></i><i style="left:19px;top:32px;width:6px;background:#9cdcfe;opacity:0.55"></i><i style="left:26px;top:32px;width:1px;background:#ffd700;opacity:0.55"></i><i style="left:8px;top:34px;width:16px;background:#6a9955;opacity:0.55"></i><i style="left:8px;top:36px;width:2px;background:#d4d4d4;opacity:0.55"></i><i style="left:10px;top:36px;width:1px;background:#da70d6;opacity:0.55"></i><i style="left:12px;top:38px;width:9px;background:#9cdcfe;opacity:0.55"></i><i style="left:21px;top:38px;width:1px;background:#cccccc;opacity:0.55"></i><i style="left:23px;top:38px;width:6px;background:#dcdcaa;opacity:0.55"></i><i style="left:29px;top:38px;width:1px;background:#179fff;opacity:0.55"></i><i style="left:30px;top:38px;width:4px;background:#b5cea8;opacity:0.55"></i><i style="left:34px;top:38px;width:1px;background:#179fff;opacity:0.55"></i><i style="left:35px;top:38px;width:1px;background:#cccccc;opacity:0.55"></i><i style="left:8px;top:40px;width:1px;background:#da70d6;opacity:0.55"></i><i style="left:8px;top:42px;width:4px;background:#d4d4d4;opacity:0.55"></i><i style="left:12px;top:42px;width:1px;background:#da70d6;opacity:0.55"></i><i style="left:12px;top:44px;width:9px;background:#9cdcfe;opacity:0.55"></i><i style="left:21px;top:44px;width:1px;background:#cccccc;opacity:0.55"></i><i style="left:22px;top:44px;width:6px;background:#dcdcaa;opacity:0.55"></i><i style="left:28px;top:44px;width:1px;background:#179fff;opacity:0.55"></i><i style="left:29px;top:44px;width:6px;background:#b5cea8;opacity:0.55"></i><i style="left:35px;top:44px;width:1px;background:#179fff;opacity:0.55"></i><i style="left:36px;top:44px;width:1px;background:#cccccc;opacity:0.55"></i><i style="left:8px;top:46px;width:1px;background:#da70d6;opacity:0.55"></i><i style="left:8px;top:48px;width:1px;background:#ffd700;opacity:0.55"></i><i style="left:4px;top:54px;width:2px;background:#808080;opacity:0.55"></i><i style="left:6px;top:54px;width:5px;background:#569cd6;opacity:0.55"></i><i style="left:11px;top:54px;width:1px;background:#808080;opacity:0.55"></i><i style="left:0px;top:56px;width:7px;background:#569cd6;opacity:0.55"></i><i style="left:0px;top:58px;width:6px;background:#569cd6;opacity:0.55"></i><i style="left:4px;top:60px;width:5px;background:#6a9955;opacity:0.50"></i><i style="left:10px;top:60px;width:12px;background:#6a9955;opacity:0.50"></i><i style="left:4px;top:62px;width:4px;background:#569cd6;opacity:0.55"></i><i style="left:9px;top:62px;width:5px;background:#9cdcfe;opacity:0.55"></i><i style="left:15px;top:62px;width:11px;background:#ce9178;opacity:0.55"></i><i style="left:27px;top:62px;width:3px;background:#9cdcfe;opacity:0.50"></i><i style="left:31px;top:62px;width:42px;background:#ce9178;opacity:0.55"></i><i style="left:4px;top:64px;width:6px;background:#569cd6;opacity:0.55"></i><i style="left:11px;top:64px;width:8px;background:#9cdcfe;opacity:0.55"></i><i style="left:20px;top:64px;width:4px;background:#569cd6;opacity:0.50"></i><i style="left:4px;top:66px;width:4px;background:#6a9955;opacity:0.50"></i><i style="left:9px;top:66px;width:8px;background:#6a9955;opacity:0.50"></i><i style="left:4px;top:68px;width:4px;background:#569cd6;opacity:0.55"></i><i style="left:9px;top:68px;width:3px;background:#9cdcfe;opacity:0.50"></i><i style="left:13px;top:68px;width:5px;background:#ce9178;opacity:0.50"></i><i style="left:19px;top:68px;width:4px;background:#9cdcfe;opacity:0.50"></i><i style="left:24px;top:68px;width:8px;background:#ce9178;opacity:0.50"></i><i style="left:33px;top:68px;width:12px;background:#9cdcfe;opacity:0.50"></i><i style="left:4px;top:70px;width:6px;background:#569cd6;opacity:0.55"></i><i style="left:11px;top:70px;width:7px;background:#9cdcfe;opacity:0.55"></i><i style="left:19px;top:70px;width:8px;background:#ce9178;opacity:0.55"></i><i style="left:4px;top:72px;width:6px;background:#569cd6;opacity:0.55"></i><i style="left:11px;top:72px;width:5px;background:#9cdcfe;opacity:0.50"></i><i style="left:4px;top:74px;width:4px;background:#569cd6;opacity:0.55"></i><i style="left:9px;top:74px;width:5px;background:#9cdcfe;opacity:0.50"></i><i style="left:15px;top:74px;width:6px;background:#ce9178;opacity:0.50"></i><i style="left:4px;top:76px;width:3px;background:#569cd6;opacity:0.55"></i><i style="left:14px;top:80px;width:11px;background:#cccccc;opacity:0.60"></i><i style="left:11px;top:86px;width:5px;background:#cccccc;opacity:0.60"></i><i style="left:17px;top:86px;width:10px;background:#cccccc;opacity:0.60"></i><i style="left:11px;top:92px;width:10px;background:#cccccc;opacity:0.60"></i><i style="left:22px;top:92px;width:9px;background:#cccccc;opacity:0.60"></i><i style="left:11px;top:98px;width:9px;background:#cccccc;opacity:0.60"></i><i style="left:11px;top:104px;width:9px;background:#cccccc;opacity:0.60"></i><i style="left:11px;top:110px;width:9px;background:#cccccc;opacity:0.60"></i><i style="left:11px;top:116px;width:7px;background:#cccccc;opacity:0.60"></i><i style="left:19px;top:116px;width:2px;background:#cccccc;opacity:0.60"></i><i style="left:11px;top:122px;width:12px;background:#cccccc;opacity:0.60"></i><i style="left:11px;top:128px;width:16px;background:#cccccc;opacity:0.60"></i><i style="left:11px;top:134px;width:10px;background:#cccccc;opacity:0.60"></i><i style="left:22px;top:134px;width:4px;background:#cccccc;opacity:0.60"></i><i style="left:5px;top:136px;width:3px;background:#cccccc;opacity:0.40"></i><i style="left:0px;top:138px;width:6px;background:#569cd6;opacity:0.55"></i><i style="left:2px;top:138px;width:6px;background:#569cd6;opacity:0.30"></i><i style="left:0px;top:142px;width:7px;background:#569cd6;opacity:0.55"></i><i style="left:0px;top:144px;width:7px;background:#569cd6;opacity:0.50"></i></div></div>
<div id="vscroll"><div class="mark"></div></div>
</div>
<div id="chat">
<div class="abs" style="left:29px;top:12px;font-size:16.5px;line-height:30px;color:#e0e0e0;white-space:nowrap">聊天</div>
<div class="abs" style="left:28px;top:42px;width:39px;height:2px;background:linear-gradient(#0a70c8,#0a5ea8)"></div>
<!-- header actions -->
<svg class="abs" style="left:162px;top:15px" width="20" height="20" viewBox="0 0 20 20" fill="none" stroke="#d0d0d0" stroke-width="1.700"><path d="M10 0v20M0 10h20"/></svg>
<svg class="abs" style="left:200px;top:14px" width="23" height="23" viewBox="0 0 23 23" fill="none" stroke="#d0d0d0" stroke-width="1.700" stroke-linecap="round" stroke-linejoin="round"><path d="M3.500 7A9.500 9.500 0 1 1 2.500 13"/><path d="M2.500 2.500V7.500H7.500"/><path d="M11.500 6.500v5.500l3.500 3"/></svg>
<svg class="abs" style="left:238px;top:15px" width="21" height="21" viewBox="0 0 21 21" fill="none" stroke="#d0d0d0" stroke-width="1.700"><circle cx="10.500" cy="10.500" r="3.200"/><circle cx="10.500" cy="10.500" r="8.500" stroke-dasharray="4.400 2.300"/></svg>
<svg class="abs" style="left:278px;top:15px" width="20" height="20" viewBox="0 0 20 20" fill="none" stroke="#d0d0d0" stroke-width="1.700"><path d="M10 0v12M4.500 7 10 12.500 15.500 7M1 18.500h18"/></svg>
<svg class="abs" style="left:339px;top:17px" width="19" height="17" viewBox="0 0 19 17" fill="none" stroke="#d0d0d0" stroke-width="1.700"><path d="M6 1H1v5M13 1h5v5M6 16H1v-5M13 16h5v-5"/></svg>
<svg class="abs" style="left:381px;top:18px" width="15" height="15" viewBox="0 0 15 15" fill="none" stroke="#d0d0d0" stroke-width="1.700" stroke-linecap="round"><path d="M1 1 14 14M14 1 1 14"/></svg>
<!-- welcome -->
<svg class="abs" style="left:183px;top:396px" width="60" height="58" viewBox="0 0 60 58" fill="none" stroke="#ccc" stroke-width="3.600" stroke-linejoin="round"><path d="M22 10H3v32h10v12l13-12h19"/><path d="M36 1Q37.800 11.700 48.500 13.500 37.800 15.300 36 26 34.200 15.300 23.500 13.500 34.200 11.700 36 1Z" fill="#ccc" stroke="#ccc" stroke-width="2"/><path d="M50 23Q51.400 30.100 58.500 31.500 51.400 32.900 50 40 48.600 32.900 41.500 31.500 48.600 30.100 50 23Z" fill="#ccc" stroke="#ccc" stroke-width="1.800"/></svg>
<div class="abs" style="left:0;top:472px;width:420px;text-align:center;font-size:36px;line-height:56px;color:#ccc;white-space:nowrap;font-weight:500"><span style="font-family:'Noto Sans CJK SC',sans-serif;font-weight:500;letter-spacing:.5px">欢迎使用</span> <span style="font-weight:400;-webkit-text-stroke:1px #ccc;letter-spacing:1px">Copilot</span></div>
<div class="abs" style="left:0;top:544px;width:420px;text-align:center;font-size:24px;line-height:38px;color:#ccc;white-space:nowrap">让我们开始吧</div>
<!-- input -->
<div class="abs" style="left:24px;top:665px;width:371px;height:98px;background:#313131;border:1px solid #3a3a3a;border-radius:6px">
<div class="abs" style="left:9px;top:13px;font-size:19.500px;line-height:30px;color:#8b8b8b;white-space:nowrap;letter-spacing:-.15px">添加上下文(#)、扩展(@)、命令(/)</div>
<svg class="abs" style="left:331px;top:60px" width="23" height="21" viewBox="0 0 24 21" fill="none" stroke="#c8c8c8" stroke-width="1.700" stroke-linejoin="round"><path d="M1.500 1.500 22 10.500 1.500 19.500 4.500 10.500z"/><path d="M4.500 10.500H14"/></svg>
</div>
<!-- suggestion buttons -->
<div class="abs" style="left:84px;top:799px;width:131px;height:38px;background:#1f1f1f;border:1px solid #303030;border-radius:6px;font-size:21px;font-weight:bold;line-height:38px;text-align:center;color:#ccc;white-space:nowrap">生成工作区</div>
<div class="abs" style="left:227px;top:799px;width:110px;height:38px;background:#1f1f1f;border:1px solid #303030;border-radius:6px;font-size:21px;font-weight:bold;line-height:38px;text-align:center;color:#ccc;white-space:nowrap">显示配置</div>
<div class="abs" style="left:0;top:919px;width:420px;text-align:center;font-size:18px;line-height:30px;color:#8b8b8b;white-space:nowrap;padding-left:0">AI 答复可能不准确。</div>
</div>

<div id="status">
<div class="remote"><svg class="abs" style="left:19px;top:7px" width="14" height="17" viewBox="0 0 14 17" fill="none" stroke="#fff" stroke-width="1.700" stroke-linecap="round" stroke-linejoin="round"><path d="M1 8l5.500 4L1 16M13 1 8 5l5 4"/></svg></div>
<svg class="abs" style="left:64px;top:6px" width="19" height="19" viewBox="0 0 19 19" fill="none" stroke="#ccc" stroke-width="1.500" stroke-linecap="round"><circle cx="9.500" cy="9.500" r="8.500"/><path d="M6 6l7 7M13 6l-7 7"/></svg>
<div class="it" style="left:89px">0</div>
<svg class="abs" style="left:105px;top:6px" width="19" height="18" viewBox="0 0 19 18" fill="none" stroke="#ccc" stroke-width="1.500" stroke-linejoin="round"><path d="M9.500 1.500 18 16.500H1z"/><path d="M9.500 7v5" stroke-width="1.800"/><circle cx="9.500" cy="14.200" r=".6" fill="#ccc"/></svg>
<div class="it" style="left:130px">0</div>
<div class="it" style="left:1906px">行 72，列 8</div>
<div class="it" style="left:2023px">空格: 4</div>
<div class="it" style="left:2102px;letter-spacing:-.8px">UTF-8</div>
<div class="it" style="left:2173px;letter-spacing:-1.900px">CRLF</div>
<div class="it" style="left:2238px;letter-spacing:2.500px">{}</div><div class="it" style="left:2267px;letter-spacing:-.7px">HTML</div>
<svg class="abs" style="left:2336px;top:5px" width="23" height="20" viewBox="0 0 23 20" fill="none" stroke="#ccc" stroke-width="1.800" stroke-linejoin="round"><path d="M3.500 8C2 4 4 1.500 7.500 1.500c2.500 0 4 1.500 4 3.500 0-2 1.500-3.500 4-3.500C19 1.500 21 4 19.500 8"/><path d="M3.500 7.500C2 8.500 1.200 10 1.200 12v2.500C3.500 17 7 18.500 11.500 18.500s8-1.500 10.300-4V12c0-2-.8-3.500-2.300-4.500"/><path d="M8.500 11.500v3M14.500 11.500v3" stroke-linecap="round" stroke-width="2"/><path d="M4 5.500c1.500 2.500 6 2.500 7.500-.5 1.500 3 6 3 7.500.5"/></svg>
<svg class="abs" style="left:2383px;top:6px" width="19" height="19" viewBox="0 0 19 19" fill="none" stroke="#ccc" stroke-width="1.500"><circle cx="9.500" cy="9.500" r="8.300"/><path d="M3.800 15.200 15.200 3.800"/></svg>
<div class="it" style="left:2407px">Port : 5500</div>
<svg class="abs" style="left:2518px;top:4px" width="21" height="22" viewBox="0 0 21 22" fill="none" stroke="#ccc" stroke-width="1.600" stroke-linejoin="round"><path d="M14.500 3.500C13 2.500 11.500 2 10 2 6 2 3.500 5 3.500 9v5L1.500 17.500h17L16.500 14V10"/><path d="M7.500 18c0 1.500 1 2.500 2.500 2.500s2.500-1 2.500-2.500"/><circle cx="16.500" cy="4.500" r="3.300" fill="#ccc" stroke="none"/></svg>
</div>

<div id="taskbar">
<div class="abs" style="left:0;top:0;width:2560px;height:2px;background:linear-gradient(#a9b3be,#c3cdd8)"></div>
<!-- widget -->
<svg class="abs" style="left:38px;top:13px" width="36" height="42" viewBox="0 0 36 42"><rect x="2" y="6" width="15" height="32" rx="3.500" fill="#f4f6f8"/><path d="M3.200 9.500a2.300 2.300 0 0 1 2.300-2.300H10c-1.500 3-2.500 6-2.300 9.500.2 3 1 5 .8 8-.2 3-1.800 6-1.500 12H5.500a2.300 2.300 0 0 1-2.300-2.300z" fill="#1d428a"/><path d="M11.500 7.200h2a2.300 2.300 0 0 1 2.300 2.300v25a2.300 2.300 0 0 1-2.300 2.300H9.500c.5-4 2.500-7 2.500-11 0-3-1.500-5-1.500-8.500 0-3.500 1.200-6 1-10z" fill="#c8102e"/><circle cx="10.500" cy="10.500" r="1.600" fill="#f4f6f8"/><circle cx="19.500" cy="9.500" r="12" fill="#c8281e"/></svg>
<div class="abs" style="left:45.500px;top:10px;width:24px;text-align:center;font-size:19px;line-height:26px;color:#fff">4</div>
<div class="abs" style="left:76px;top:11px;font-size:18px;line-height:27px;color:#1b1b1b;white-space:nowrap">体育头条</div>
<div class="abs" style="left:76px;top:35px;font-size:18px;line-height:27px;color:#5c5c5c;white-space:nowrap">乌多卡：交易得...</div>
<!-- start -->
<svg class="abs" style="left:732px;top:19px" width="35" height="35" viewBox="0 0 35 35"><defs><linearGradient id="wg" x1="0" y1="0" x2="1" y2="1"><stop offset="0" stop-color="#3ec6f7"/><stop offset="1" stop-color="#0a6fd2"/></linearGradient></defs><path d="M0 1.500A1.500 1.500 0 0 1 1.500 0h15v16.500H0zM18.500 0h15A1.500 1.500 0 0 1 35 1.500v15H18.500zM0 18.500h16.500V35h-15A1.500 1.500 0 0 1 0 33.500zM18.500 18.500H35v15a1.500 1.500 0 0 1-1.500 1.500h-15z" fill="url(#wg)"/></svg>
<!-- search pill -->
<div class="abs" style="left:788px;top:13px;width:327px;height:46px;border-radius:23px;background:linear-gradient(90deg,#f4f7fb,#eaf0f8);border:1px solid #cdd5df;box-shadow:0 1px 2px rgba(0,0,0,.12)"></div>
<svg class="abs" style="left:803px;top:23px" width="25" height="26" viewBox="0 0 25 26" fill="none" stroke="#222" stroke-width="2.400" stroke-linecap="round"><circle cx="10.500" cy="10.500" r="8.300"/><path d="M16.500 17 22.500 23.500"/></svg>
<div class="abs" style="left:841px;top:20px;font-size:21px;line-height:32px;color:#555;white-space:nowrap">搜索</div>
<!-- sloth -->
<svg class="abs" style="left:1040px;top:16px" width="72" height="40" viewBox="0 0 72 40"><path d="M8 3C25 6 45 14 68 34l-3 4C45 20 25 11 7 7z" fill="#8a5a3c"/><path d="M36 2l4 9-3 1-3-9z" fill="#8a5a3c"/><path d="M4 3c3-4 8-3 9 0-3 3-7 3-9 0zM56 12c0-5 4-8 7-7-1 5-3 8-7 9zM60 14c3-3 7-4 9-2-2 4-5 5-9 4z" fill="#9bc53d"/><ellipse cx="28" cy="24" rx="15" ry="10" transform="rotate(18 28 24)" fill="#a89684"/><path d="M12 8c3 2 4 8 4 12l-5 1c0-5-1-9-3-12zM38 12c3 3 6 7 6 14l-5 1c0-5-2-9-5-12z" fill="#a89684"/><ellipse cx="17" cy="14" rx="8.500" ry="7.500" fill="#b8a896"/><ellipse cx="17" cy="15" rx="6" ry="5" fill="#efe6da"/><ellipse cx="14" cy="14" rx="2.200" ry="1.500" fill="#4a3a30"/><ellipse cx="20.500" cy="14" rx="2.200" ry="1.500" fill="#4a3a30"/><ellipse cx="17.200" cy="16.500" rx="1.400" ry="1" fill="#3a2a22"/><path d="M6 24c-3 1-4 4-3 6l4-2zM30 32c-2 2-5 4-8 4l1-4z" fill="#a89684"/></svg>
<!-- task view -->
<svg class="abs" style="left:1133px;top:18px" width="38" height="36" viewBox="0 0 38 36"><defs><linearGradient id="tv1" x1="0" y1="0" x2="0" y2="1"><stop offset="0" stop-color="#3a3a3a"/><stop offset="1" stop-color="#1c1c1c"/></linearGradient><linearGradient id="tv2" x1="0" y1="0" x2="1" y2="1"><stop offset="0" stop-color="#fdfdfd"/><stop offset="1" stop-color="#c9c9c9"/></linearGradient></defs><rect x="1" y="10.500" width="27.500" height="24" rx="2.500" fill="url(#tv1)"/><rect x="10" y="1" width="27" height="23" rx="2.500" fill="url(#tv2)" opacity=".95"/></svg>
<!-- explorer -->
<svg class="abs" style="left:1199px;top:19px" width="39" height="34" viewBox="0 0 39 34"><path d="M1 4a2.500 2.500 0 0 1 2.500-2.500h9l3.500 3.500H35.500A2.500 2.500 0 0 1 38 7.500V12H1z" fill="#e3a21a"/><path d="M1 8h37v23.500A2.500 2.500 0 0 1 35.500 34h-32A2.500 2.500 0 0 1 1 31.500z" fill="#fcd354"/><path d="M8 27a3 3 0 0 1 3-3h17a3 3 0 0 1 3 3v7H8z" fill="#1579d6"/><rect x="14" y="27.500" width="11" height="2.600" rx="1.300" fill="#0b4f9e"/></svg>
<!-- edge -->
<svg class="abs" style="left:1265px;top:17px" width="38" height="38" viewBox="0 0 38 38"><defs><linearGradient id="eg1" x1="0" y1="0" x2=".6" y2="1"><stop offset="0" stop-color="#2ab0ee"/><stop offset=".5" stop-color="#1678d0"/><stop offset="1" stop-color="#0d4f9e"/></linearGradient><linearGradient id="eg2" x1="0" y1=".2" x2="1" y2=".6"><stop offset="0" stop-color="#2fb9ea"/><stop offset=".5" stop-color="#35c8c0"/><stop offset="1" stop-color="#6fdc4a"/></linearGradient></defs>
<circle cx="19" cy="19" r="18" fill="url(#eg1)"/>
<path d="M3 11.500C7 5 12.500 1 19 1c11 0 18 7 18 16 0 6-4 9.300-9 9.300-3 0-4.800-1-4.800-2.600 0-1.500 1.600-2 1.600-4.200 0-3.500-3-5.800-6.300-5.800C12.500 13.700 7.500 17.500 5.500 23.500 3 20 2 15.500 3 11.500z" fill="url(#eg2)"/>
<path d="M19.800 14.300c-3.300 1.200-5.200 3.800-4.900 6.700.5 4.200 4.100 7.200 9.100 7.800 3.800.5 7-.1 9.500-1-2.800 1.500-6.500.8-9-1.800-1.800-1.900-2.600-4.300-1.800-6.200.8-2 .3-4.300-2.900-5.500z" fill="#e9f1f8"/>
<path d="M33.500 27.800c-3 5.800-8.500 9.200-14.500 9.200-6.500 0-11.500-4.500-12.500-11 2 5 7 8.200 13 7.800 5.500-.4 10.500-2.500 14-6z" fill="#0c4a94" opacity=".55"/>
</svg>
<!-- store -->
<svg class="abs" style="left:1331px;top:18px" width="37" height="36" viewBox="0 0 37 36"><path d="M11 8V4.500A2.500 2.500 0 0 1 13.500 2h10A2.500 2.500 0 0 1 26 4.500V8" fill="none" stroke="#3cb6ee" stroke-width="2.600"/><path d="M1 8a2 2 0 0 1 2-2h31a2 2 0 0 1 2 2v23a5 5 0 0 1-5 5H6a5 5 0 0 1-5-5z" fill="#1a4c88"/><rect x="11" y="13" width="7" height="7" fill="#f25022"/><rect x="19.500" y="13" width="7" height="7" fill="#7fba00"/><rect x="11" y="21.500" width="7" height="7" fill="#00a4ef"/><rect x="19.500" y="21.500" width="7" height="7" fill="#ffb900"/></svg>
<!-- hex dark -->
<svg class="abs" style="left:1399px;top:18px" width="35" height="36" viewBox="0 0 35 36"><path d="M17.500 1 33 9.500v17L17.500 35 2 26.500v-17z" fill="#4a4d52" stroke="#2b2d30" stroke-width="1.500"/><path d="M17.500 1 33 9.500 17.500 18 2 9.500z" fill="#6d7075"/><path d="M17.500 8 26.500 25 8 21z" fill="#1d1e20"/><path d="M17.500 8 26.500 25 17.500 21z" fill="#3a3c40"/><path d="M8 21l18.500 4L17.500 29z" fill="#8b8e93"/></svg>
<!-- MA -->
<svg class="abs" style="left:1463px;top:17px" width="38" height="37" viewBox="0 0 38 37"><defs><linearGradient id="mag" x1="0" y1="0" x2="1" y2="1"><stop offset="0" stop-color="#0f66e0"/><stop offset="1" stop-color="#0a4fc4"/></linearGradient></defs><rect width="38" height="37" fill="url(#mag)"/><path d="M6 26 13 10h4.500L10.500 26zM14 26l7-16h4.500l-7 16zM24.500 10H28l3.500 16h-4l-2-10z" fill="#e8f0ff"/><circle cx="26" cy="24.500" r="1.800" fill="#fff"/></svg>
<!-- Ai -->
<svg class="abs" style="left:1530px;top:17px" width="37" height="37" viewBox="0 0 37 37"><defs><linearGradient id="aig" x1="0" y1="0" x2="1" y2="1"><stop offset="0" stop-color="#4f9bf8"/><stop offset="1" stop-color="#2d78f0"/></linearGradient></defs><rect width="37" height="37" rx="5" fill="url(#aig)"/><path d="M18.500 4 31 11v15L18.500 33 6 26V11z" fill="none" stroke="#9cc6ff" stroke-width="1.300"/><path d="M11 24 16.500 13H21l-5.500 11zM21.500 13H24l2 11h-3.500z" fill="#fff"/></svg>
<!-- WPS -->
<svg class="abs" style="left:1595px;top:24px" width="38" height="25" viewBox="0 0 38 25"><path d="M0 0h7.500l4.500 14.500L16.500 3h5L26 14.500 28.500 7l-4-1.500L27 0h11l-8.500 24.500h-6.500L19 12.500l-4.500 12H8z" fill="#ef2b1e"/><path d="M24.500 5.500 27 0h11l-2.500 7z" fill="#b8140c"/><path d="M28.500 7 35.500 7 32 16z" fill="#ff6a4a" opacity=".55"/></svg>
<!-- chrome -->
<svg class="abs" style="left:1661px;top:17px" width="38" height="38" viewBox="0 0 38 38"><circle cx="19" cy="19" r="18" fill="#fff"/><path d="M19 1a18 18 0 0 1 15.600 9H19a9 9 0 0 0-7.800 4.500L3.400 10A18 18 0 0 1 19 1z" fill="#e33b2e"/><path d="M34.600 10A18 18 0 0 1 19 37l7.800-13.500A9 9 0 0 0 26.800 14.500 9 9 0 0 0 19 10z" fill="#fbc116"/><path d="M3.400 10l7.800 13.500A9 9 0 0 0 26.800 23.500L19 37A18 18 0 0 1 3.400 10z" fill="#2da94f"/><circle cx="19" cy="19" r="8.300" fill="#fff"/><circle cx="19" cy="19" r="6.700" fill="#4285f4"/></svg>
<!-- baidu netdisk -->
<svg class="abs" style="left:1728px;top:17px" width="37" height="37" viewBox="0 0 37 37"><rect width="37" height="37" rx="8" fill="#fdfdfe"/><g fill="none" stroke-width="3.300" stroke-linecap="round"><circle cx="18.500" cy="13.500" r="4.500" stroke="#ef3b4e"/><path d="M13.500 17.500c-4-2-8 .5-8 4.500 0 3 2.500 5 5 5 3.500 0 5-2.500 6-5l2-4" stroke="#1f9bf0"/><path d="M23.500 17.500c4-2 8 .5 8 4.500 0 3-2.500 5-5 5-2 0-3.500-1-4.500-2.500" stroke="#1f9bf0"/></g><rect x="12.500" y="33" width="6.500" height="2" fill="#ef3b4e"/><rect x="19" y="33" width="6" height="2" fill="#1f9bf0"/></svg>
<!-- vscode -->
<svg class="abs" style="left:1793px;top:17px" width="38" height="38" viewBox="0 0 100 100"><path d="M74.500 2.500 30 43.500 11 29 3 33v34l8 4 19-14.500 44.500 41L97 88.500v-77zM74.500 66 53 50l21.500-16z" fill="#1f8ad2"/><path d="M74.500 2.500 97 11.500v77l-22.500 9z" fill="#2aa7f0"/></svg>
<i class="abs" style="left:1676px;top:60px;width:9px;height:4px;border-radius:2px;background:#858585"></i>
<i class="abs" style="left:1742px;top:60px;width:9px;height:4px;border-radius:2px;background:#858585"></i>
<i class="abs" style="left:1808px;top:60px;width:9px;height:4px;border-radius:2px;background:#858585"></i>
<!-- tray -->
<div class="abs" style="left:2117px;top:8px;width:44px;height:56px;border-radius:6px;background:rgba(255,255,255,.55);border:1px solid rgba(255,255,255,.6)"></div>
<svg class="abs" style="left:2131px;top:31px" width="17" height="11" viewBox="0 0 17 11" fill="none" stroke="#1b1b1b" stroke-width="2" stroke-linecap="round" stroke-linejoin="round"><path d="M1.500 1.500 8.500 8.500l7-7"/></svg>
<!-- cloud off -->
<svg class="abs" style="left:2221px;top:22px" width="28" height="26" viewBox="0 0 28 26" fill="none" stroke="#222" stroke-width="1.700" stroke-linecap="round"><path d="M7 20.500c-3.500 0-5.500-2.300-5.500-5s2-4.700 4.500-5C6.500 6.500 9.500 4 13 4c3.500 0 6 2 7 5 3.500 0 6 2.500 6 5.800s-2.500 5.700-6 5.700z" fill="#9a9a9a" fill-opacity=".55"/><path d="M4 2 24 24" stroke-width="2"/></svg>
<div class="abs" style="left:2271px;top:20px;font-size:22px;line-height:30px;color:#1b1b1b">中</div>
<!-- wifi -->
<svg class="abs" style="left:2319px;top:24px" width="25" height="20" viewBox="0 0 25 20" fill="none" stroke="#1b1b1b" stroke-width="1.800" stroke-linecap="round"><path d="M1.500 7.500c6-6.500 16-6.500 22 0M5 11.500c4.200-4.500 10.800-4.500 15 0M8.500 15c2.400-2.500 5.600-2.500 8 0"/><circle cx="12.500" cy="18" r="1.500" fill="#1b1b1b" stroke="none"/></svg>
<!-- mute -->
<svg class="abs" style="left:2355px;top:25px" width="24" height="19" viewBox="0 0 24 19" fill="none" stroke="#1b1b1b" stroke-width="1.600" stroke-linecap="round" stroke-linejoin="round"><path d="M1 6.500h3.500L10 1.500v16l-5.500-5H1z"/><path d="M15 6.500l6.500 6.500M21.500 6.500 15 13"/></svg>
<!-- battery -->
<svg class="abs" style="left:2390px;top:26px" width="26" height="16" viewBox="0 0 26 16" fill="none" stroke="#1b1b1b" stroke-width="1.600"><rect x="1" y="1.500" width="20.500" height="13" rx="3"/><path d="M23.500 5.500v5" stroke-width="2.400" stroke-linecap="round"/><rect x="3.500" y="4" width="7" height="8" rx="1" fill="#1b1b1b" stroke="none"/></svg>
<div class="abs" style="left:2400px;top:10px;width:131px;text-align:right;font-size:18px;line-height:26px;color:#1b1b1b;white-space:nowrap">16:39</div>
<div class="abs" style="left:2400px;top:35px;width:131px;text-align:right;font-size:18px;line-height:26px;color:#1b1b1b;white-space:nowrap">2025/10/20</div>
</div>

<div id="tray" class="abs" style="left:1984px;top:1317px;width:311px;height:191px;border-radius:12px;background:#dcdcdc;border:1px solid #c9c9c9;box-shadow:0 4px 14px rgba(0,0,0,.35)">
<div class="abs" style="left:127px;top:67px;width:56px;height:57px;border-radius:6px;background:#efefef;box-shadow:0 1px 2px rgba(0,0,0,.12)"></div>
<!-- row 1 -->
<svg class="abs" style="left:23px;top:23px" width="24" height="24" viewBox="0 0 24 24"><rect width="24" height="24" fill="#1b1b1b"/><path d="M10 6h11.500v12.500H10z" fill="#76b900"/><path d="M2.500 12.300c2-3.800 5.200-5.600 8.500-5.600 3.200 0 6.200 2 7.800 4.800-1.600 3.300-4.600 5.500-7.800 5.500-3.300 0-6.500-1.500-8.500-4.700z" fill="#1b1b1b" stroke="#76b900" stroke-width="1.300"/><path d="M6.300 12.200c1.100-2 2.900-3 4.700-3 2 0 3.600 1.200 4.200 3-.8 1.900-2.400 3-4.200 3-1.900 0-3.600-1-4.700-3z" fill="none" stroke="#76b900" stroke-width="1.200"/><circle cx="11" cy="12.200" r="1.300" fill="#76b900"/></svg>
<svg class="abs" style="left:85px;top:23px" width="20" height="24" viewBox="0 0 20 24"><path d="M1 1h8v10H1zM11 1h8v10h-8zM1 13h8v4L1 24zM11 13h8v11l-8-7z" fill="#000"/></svg>
<svg class="abs" style="left:143px;top:22px" width="26" height="26" viewBox="0 0 26 26"><path d="M14 1l8 9-4 6-4-4z" fill="#0b6cf5"/><path d="M22 10l3 3-7 3z" fill="#2f8ffc"/><path d="M1 14l13-2 4 4-6 5z" fill="#1fd0f5"/><path d="M12 21l6-5 1 3-4 6z" fill="#0f7df0"/><path d="M1 14l7 5 4 2z" fill="#10a8e0"/></svg>
<svg class="abs" style="left:203px;top:23px" width="24" height="25" viewBox="0 0 24 25"><rect width="24" height="24" rx="5.500" fill="#fff"/><g fill="none" stroke-width="2.300" stroke-linecap="round"><circle cx="12" cy="8.500" r="2.800" stroke="#ef3b4e"/><path d="M8.800 11.300c-2.500-1.300-5 .3-5 2.900 0 1.900 1.500 3.200 3.200 3.200 2.200 0 3.200-1.600 3.800-3.200l1.200-2.500" stroke="#1f9bf0"/><path d="M15.200 11.300c2.500-1.300 5 .3 5 2.900 0 1.900-1.500 3.200-3.200 3.200-1.300 0-2.300-.6-2.900-1.600" stroke="#1f9bf0"/></g><rect x="8" y="22.500" width="4" height="1.500" fill="#ef3b4e"/><rect x="12" y="22.500" width="4" height="1.500" fill="#1f9bf0"/></svg>
<svg class="abs" style="left:263px;top:22px" width="26" height="26" viewBox="0 0 26 26"><defs><linearGradient id="m3a" x1="0" y1="0" x2="0" y2="1"><stop offset="0" stop-color="#2a7de8"/><stop offset=".5" stop-color="#27c08a"/><stop offset="1" stop-color="#f5c518"/></linearGradient><linearGradient id="m3b" x1="0" y1="0" x2="1" y2="1"><stop offset="0" stop-color="#1a5fe0"/><stop offset=".6" stop-color="#b04fe0"/><stop offset="1" stop-color="#f0457a"/></linearGradient></defs><path d="M2 12C2 6 5 2 10 2h5c3 0 4 2 3 5l-3 9c-1 3-3 4-6 4-4 0-7-3-7-8z" fill="url(#m3a)"/><path d="M14 8c1-3 3-4 6-4 3 0 5 2 4 6l-2 8c-1 3-3 4-6 4h-5c3 0 4-1 5-4z" fill="url(#m3b)"/><rect x="9" y="17" width="17" height="7" rx="1.500" fill="#111"/><text x="17.500" y="22.700" font-family="Liberation Sans,sans-serif" font-weight="700" font-size="6.500" fill="#fff" text-anchor="middle">M365</text></svg>
<!-- row 2 -->
<svg class="abs" style="left:23px;top:83px" width="24" height="24" viewBox="0 0 24 24"><circle cx="12" cy="12" r="11.500" fill="#f7e11c"/><path d="M2 8C4 3 8 .5 12 .5c4 0 7.500 2 9.500 5.500l-3 2C17 5.500 14.500 4.500 12 4.500 8.500 4.500 6 6.500 5 9zM22 16c-2 5-6 7.500-10 7.500-4 0-7.500-2-9.500-5.500l3-2c1.500 2.500 4 3.500 6.500 3.500 3.500 0 6-2 7-4.500z" fill="#2aa745"/><path d="M10.300 6.500h3.400v3.800h3.800v3.400h-3.800v3.800h-3.400v-3.800H6.500v-3.400h3.800z" fill="#2aa745"/></svg>
<svg class="abs" style="left:83px;top:83px" width="24" height="24" viewBox="0 0 24 24"><rect width="24" height="24" rx="4.500" fill="#1b2224"/><path d="M4 4l4 2.500h8L20 4l.5 7c0 5.500-4 9-8.500 9s-8.500-3.500-8.500-9z" fill="#3fd6b8"/><circle cx="12" cy="13" r="5.800" fill="none" stroke="#1b2224" stroke-width="1.100"/><path d="M8.500 10.500h3.500L9.500 16.500M12.500 10l3.500 6.500M16 10l-3.500 6.500" fill="none" stroke="#1b2224" stroke-width="1.200"/></svg>
<svg class="abs" style="left:143px;top:83px" width="24" height="24" viewBox="0 0 24 24"><defs><linearGradient id="grd" x1="0" y1="0" x2="0" y2="1"><stop offset="0" stop-color="#8a8a8a"/><stop offset=".45" stop-color="#c4c4c4"/><stop offset="1" stop-color="#4a4a4a"/></linearGradient></defs><rect width="24" height="24" fill="#2c2c2c"/><rect x="2.500" y="2.500" width="19" height="19" fill="url(#grd)"/><path d="M2.500 5.500h19M2.500 8.500h19M2.500 11.500h19M2.500 14.500h19M2.500 17.500h19M6 2.500v19M9.500 2.500v19M13 2.500v19M16.500 2.500v19M20 2.500v19" stroke="#3a3a3a" stroke-width=".8"/></svg>
<svg class="abs" style="left:203px;top:82px" width="26" height="27" viewBox="0 0 26 27"><path d="M11.500 1c3 2 6.500 3 10.500 3v8c0 6-4 10.500-10.500 13C5 22.500 1 18 1 12V4c4 0 7.500-1 10.500-3z" fill="#1a8be0"/><path d="M11.500 1v24C5 22.500 1 18 1 12V4c4 0 7.500-1 10.500-3z" fill="#3cb4f5"/><path d="M1 12h21c0 6-4 10.500-10.500 13C5 22.500 1 18 1 12z" fill="#0f6cc4" opacity=".55"/><path d="M19.500 14.500 26 26H13z" fill="#fdc714"/><path d="M19.500 18.500v3.500" stroke="#111" stroke-width="1.400"/><circle cx="19.500" cy="23.900" r=".8" fill="#111"/></svg>
<svg class="abs" style="left:263px;top:83px" width="26" height="25" viewBox="0 0 26 25"><path d="M1 2l9 5 10-5 .500-.5V19l-5 3H10l-4.500 1.500L1 21z" fill="#c8201e"/><path d="M5.500 10l4.500 2.500 5-2.500v7h-5L5.500 19z" fill="#dcdcdc"/><path d="M19.500 12.500 26 24H13z" fill="#fdc714"/><path d="M19.500 16.500v3.500" stroke="#111" stroke-width="1.400"/><circle cx="19.500" cy="21.900" r=".8" fill="#111"/></svg>
<!-- row 3 -->
<svg class="abs" style="left:26px;top:143px" width="19" height="25" viewBox="0 0 19 25"><ellipse cx="9.500" cy="12.500" rx="9.300" ry="12.300" fill="#0a84f0"/><path d="M5 8l9 8.500-4.500 4v-16l4.500 4L5 17" fill="none" stroke="#fff" stroke-width="1.500" stroke-linejoin="round" stroke-linecap="round"/></svg>
</div>

<svg id="chibi" class="abs" style="left:2310px;top:60px" width="240" height="200" viewBox="2310 60 240 200">
<defs>
<g id="wingL">
<path d="M2365.500 81.800c-3 14-2 36 8 62l5-5c-7-18-11-38-13-57z" fill="#f4f4f4"/>
<path d="M2361 92c-1 14 3 32 11 48l3-4c-7-14-12-30-14-44z" fill="#dcdcdc"/>
<path d="M2344.700 96.700 2353 103l4 10 8 10 8 14-3 5c-8-12-20-24-30-36z" fill="#f6f6f6"/>
<path d="M2350 108l6 8M2356 116l7 10M2347 104l-2 4" stroke="#8d8d8d" stroke-width="1.200" fill="none"/>
<path d="M2320.400 73.900 2329.500 79.800 2339.500 89.800 2347 97 2354.600 104.600 2355.600 114.500 2352 119 2347 114.500 2336 104.600 2327.800 89.800 2321.400 79.800Z" fill="#4fdcc0"/>
<path d="M2337 105l15 14 3 9-7-6z" fill="#ececec"/><path d="M2340 108l12 12" stroke="#9a9a9a" stroke-width="1"/>
<circle cx="2369" cy="127" r="3.300" fill="#f4f4f4" stroke="#bdbdbd" stroke-width=".8"/><circle cx="2369.500" cy="127.500" r="1.500" fill="#7ee8d3"/>
</g>
</defs>
<use href="#wingL"/>
<use href="#wingL" transform="translate(4854 0) scale(-1 1)"/>
<!-- lower blades -->
<path d="M2349.700 238.300c9-3 15-10 18.800-18.900l4 3c-5 9-13 15-22.800 15.900zM2502.400 239.300c-9-3.500-16-11-19.800-19.900l-4 3c5 9 13 16 23.800 16.900z" fill="#4fdcc0"/>
<!-- base -->
<path d="M2394 228h65l15 17c-8 6-28 9-47 9s-40-3-48-9z" fill="#fdfdfd"/>
<!-- long hair: outer white -->
<path d="M2378 120c-8 18-18 48-20.400 69.700-1 8-1.500 14-1 19.800 1 8 4 14 8.900 19.800l6 8c3-3 5-6 6-9h98.600c1 3 3 6 6 9l6-8c5-6 8-12 8.900-19.800.5-6 0-12-1-19.800-2.400-21.700-12.400-51.700-20.400-69.700z" fill="#f4f3f3"/>
<!-- hair back blob -->
<path d="M2427 69C2455 69 2478 88 2481.600 123.500C2483 135 2483 145 2489 151C2485 153 2481 152 2478 149.500L2479 172H2375L2376 149.500C2373 152 2369 153 2365 151C2371 145 2371 135 2372.500 123.500C2376 88 2399 69 2427 69Z" fill="#f6f5f5"/>
<!-- inner shade -->
<path d="M2398 148C2388 170 2380 205 2383 228.300L2394 228.300H2459L2471 228.300C2474 205 2466 170 2456 148Z" fill="#b7b2b1"/>
<path d="M2384 158c-7 22-9 48-4 72l5-2c-3-22-2-46 6-70zM2470 158c7 22 9 48 4 72l-5-2c3-22 2-46-6-70z" fill="#d6d2d1"/>
<path d="M2372 150c-7 22-10 50-5 78M2482 150c7 22 10 50 5 78M2379 160c-6 22-7 46-3 68M2475 160c6 22 7 46 3 68" fill="none" stroke="#a9a4a3" stroke-width=".9"/>
<!-- legs -->
<path d="M2410 229h16v10c0 3-3 4-8 4s-8-1-8-4z" fill="#bdb6b4"/>
<path d="M2410 238h16v2c0 3-3 4-8 4s-8-1-8-4z" fill="#f7f7f7"/>
<path d="M2428 228h15v9c0 3-3 4-7.500 4s-7.500-1-7.500-4z" fill="#f5c9b2"/>
<path d="M2428 229.500h15" stroke="#6a5d5a" stroke-width="1.200"/>
<path d="M2410 229v11c0 3 3 4 8 4s8-1 8-4v-11M2428 228v9c0 3 3 4 7.500 4s7.500-1 7.500-4v-9" fill="none" stroke="#3a3335" stroke-width=".9"/>
<!-- skirt -->
<path d="M2409.200 205.500 2394.300 217.400 2402 229c8 2 17 2 25-1 8 3 17 3 25 1l6.800-13.500-17.800-10z" fill="#413d3f"/>
<path d="M2397 219l6-5 3 13-4 1zM2404 213l4-3 1 16-3 1zM2457 217l-6-5-3 15 4 1zM2450 211l-4-3-1 18 3 1z" fill="#4fdcc0"/>
<path d="M2412 212l1.500 14M2442 212l-1.500 14" stroke="#f09aa0" stroke-width="1.500"/>
<path d="M2401 228c9 3 18 3 26-1 8 4 17 4 26 1" fill="none" stroke="#fafafa" stroke-width="2.600"/>
<path d="M2400 230.500c9 3 19 3 27-1 8 4 17 4 26 1" fill="none" stroke="#2f2a2c" stroke-width=".8"/>
<!-- torso -->
<path d="M2417 168h16.500l2 38h-21z" fill="#5d5558"/>
<path d="M2421 168l4 8 4-8z" fill="#d9cfc2"/>
<path d="M2420 196h10l3 12h-16z" fill="#6d6366"/>
<!-- cape teal -->
<path d="M2433 172.500 2449 205.500h-16z" fill="#4fdcc0"/>
<path d="M2433 172v34" stroke="#fafafa" stroke-width="1.400"/>
<path d="M2436 170c6 1 9 6 9 12l-1 8-8-18z" fill="#fafafa"/>
<path d="M2441 205l6 .500 4 4-8-1z" fill="#fafafa"/>
<!-- left arm -->
<path d="M2416 169c-6 2-9 8-8 15l2 20 7 2-1-18 4-12z" fill="#fafafa"/>
<path d="M2409 176c2-2 6-2 8 0l-1 7c-2 1-5 1-7 0z" fill="#f3e3da"/>
<path d="M2417 180l8 12-3 3-7-9z" fill="#4fdcc0"/>
<path d="M2404 206l8-5 6 5-6 4zM2400 209l8-6 1 4z" fill="#fafafa"/>
<path d="M2405 200l4-5 1 4z" fill="#f0521f"/>
<path d="M2413 213c1-2 4-2 5 0M2437 212c1-2 4-2 5 0" stroke="#f3d5c8" stroke-width="2.200" fill="none" stroke-linecap="round"/>
<!-- face -->
<path d="M2394 141c0-15 14-25.500 33.500-25.500s33.500 10.500 33.500 25.500c0 17.500-14 27.500-33.500 27.500S2394 158.500 2394 141z" fill="#fdeadf"/>
<!-- eyes -->
<g id="eye"><ellipse cx="2405.200" cy="140" rx="10.300" ry="12" fill="#2cc9b8"/><ellipse cx="2405.200" cy="143.500" rx="7.500" ry="7.500" fill="#7df0e0"/><ellipse cx="2405.200" cy="137" rx="4" ry="5" fill="#21a99f"/><circle cx="2402" cy="134" r="2.400" fill="#fff"/><circle cx="2408.500" cy="145" r="1.500" fill="#fff"/><path d="M2393 136c2-8 7-12 13-12s10 3 12.500 8" fill="none" stroke="#3d302d" stroke-width="2.500" stroke-linecap="round"/><path d="M2394.500 135l-2.500-1.500M2396 131l-2-2.500" stroke="#3d302d" stroke-width="1.200"/></g>
<use href="#eye" transform="translate(4854 0) scale(-1 1)"/>
<ellipse cx="2406.700" cy="155.500" rx="5.500" ry="2.600" fill="#f9c4c2" opacity=".85"/><ellipse cx="2446" cy="155.500" rx="5.500" ry="2.600" fill="#f9c4c2" opacity=".85"/>
<path d="M2423 158.500c1.500 1.500 3 1.500 4 .3 1 1.200 2.500 1.200 4-.3" fill="none" stroke="#9a5f58" stroke-width=".9" stroke-linecap="round"/>
<path d="M2396.500 149.500c1-1.500 3-1 3 .5 1.500-.5 2.500 1 1.500 2l-3 2.500-2-3z" fill="#4fdcc0"/>
<!-- bangs -->
<path d="M2384 100L2388 164C2391 156 2393 146 2394 136C2395 130 2397 125 2400 121C2404 117.500 2410 116 2416 118C2420 121 2425 127 2430.500 131.400C2433 126 2435 121 2438 117C2444 113.500 2451 115 2455 121C2458 126 2460 132 2461 138C2462 148 2464 157 2467 164L2470 100C2460 84 2445 74 2427 74S2394 84 2384 100Z" fill="#f6f5f5"/>
<path d="M2423 76c-6 12-8 26-4 40M2433 78c7 10 10 22 8 36M2410 82c-8 9-12 20-12 34M2447 84c6 9 9 20 8 32M2437 92c1 12-1 26-6.500 39" fill="none" stroke="#c9c5c4" stroke-width="1.300" stroke-linecap="round"/>
<path d="M2419 98c-1 10 3 22 11 32M2388 120c-1 14 0 28 1 42M2466 120c1 14 0 28-1 42" fill="none" stroke="#d6d2d1" stroke-width="1.500" stroke-linecap="round"/>
<!-- ear boxes -->
<g id="earbox"><path d="M2374 71.500 2396 69.500 2401 76 2398.500 91 2381.500 98 2375.500 94z" fill="#a8a8a8"/><path d="M2377.500 73.500 2395 72 2399 77 2397 90 2382.500 96 2379 93z" fill="#2b2b2d"/></g>
<path id="earpat" d="M2382 77.500l5.500-1.200 3 3.200 4.500-3.500 2 4.500-5.500 5 1 6.500-7.500 3.500-1.200-9-3.300-1 3-3.500z" fill="#f2541e"/>
<use href="#earbox" transform="translate(4854 0) scale(-1 1)"/>
<path transform="translate(4854 0) scale(-1 1)" d="M2382 77.500l5.500-1.200 3 3.200 4.500-3.500 2 4.500-5.500 5 1 6.500-7.500 3.500-1.200-9-3.300-1 3-3.500z" fill="#4fdcc0"/>
<!-- badge -->
<circle cx="2392.300" cy="109.100" r="10.400" fill="#27a5ae"/>
<circle cx="2392.300" cy="109.100" r="7.600" fill="none" stroke="#d8f6f6" stroke-width="1.300"/>
<path d="M2387.500 104.500h5.500l-5 10.500M2393.500 103.500l4.500 10M2398 103.500l-7 12.500" fill="none" stroke="#e8fbfb" stroke-width="1.500"/>
</svg>

<div id="wm" class="abs" style="left:2260px;top:1531px;font-size:25px;line-height:34px;letter-spacing:0;color:rgba(45,45,45,.88);white-space:nowrap;text-shadow:1px 1px 1px rgba(255,255,255,.95),-1px -1px 1px rgba(255,255,255,.95),1px -1px 1px rgba(255,255,255,.95),-1px 1px 1px rgba(255,255,255,.95)">掘金技术社区 @ 李晨卓</div>

</div>
</body>
</html>
